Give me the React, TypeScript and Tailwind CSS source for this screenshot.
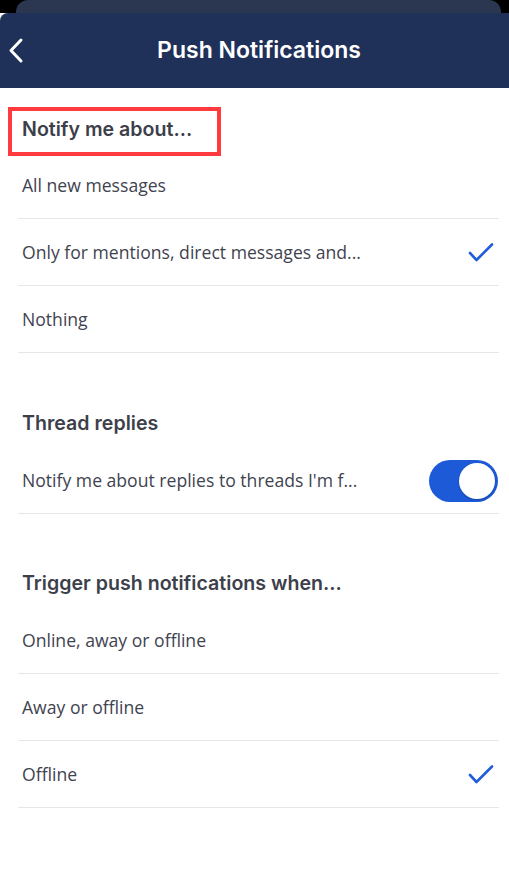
import React from "react";

function Check() {
  return (
    <svg width="26" height="20" viewBox="0 0 26 20" fill="none" className="shrink-0">
      <path d="M2 10 L8.5 17 L24 1.5" stroke="#1f5ddb" strokeWidth="2.6" strokeLinecap="round" strokeLinejoin="round" />
    </svg>
  );
}

function Row({ text, checked, toggle }: { text: string; checked?: boolean; toggle?: boolean }) {
  return (
    <div className="ml-[18px] mr-[10px] flex h-[67px] items-center justify-between border-b border-[#e6e6e8] pl-[4px]">
      <span className="text-[17.6px] text-[#3f4350]" style={{ fontFamily: '"Open Sans", sans-serif' }}>
        {text}
      </span>
      {checked && (
        <div className="mr-[5px] mt-[1px]">
          <Check />
        </div>
      )}
      {toggle && (
        <div className="mr-[1px] mt-[1px] flex h-[42px] w-[69px] items-center justify-end rounded-full bg-[#1d5ad8] pr-[3px]">
          <div className="h-[36px] w-[36px] rounded-full bg-white shadow-[0_1px_2px_rgba(0,0,0,0.25)]" />
        </div>
      )}
    </div>
  );
}

function Heading({ children, className = "" }: { children: React.ReactNode; className?: string }) {
  return (
    <div
      className={`pl-[22px] text-[19.6px] font-semibold leading-[24px] text-[#3d3f4b] ${className}`}
      style={{ fontFamily: 'Inter, "Open Sans", sans-serif' }}
    >
      {children}
    </div>
  );
}

export default function App() {
  return (
    <div className="min-h-[876px] w-[509px] bg-white">
      <div className="h-[13px] bg-black px-[16px] pr-[8px]">
        <div className="h-[13px] rounded-t-[12px] bg-[#2b3650]" />
      </div>
      <div className="relative flex h-[75px] items-center justify-center rounded-tl-[8px] bg-[#1f3059]">
        <svg className="absolute left-[7px] top-[24px]" width="18" height="28" viewBox="0 0 18 28" fill="none">
          <path d="M14 3 L4 13.5 L14 24" stroke="white" strokeWidth="3" strokeLinecap="round" strokeLinejoin="round" />
        </svg>
        <span
          className="ml-[9px] text-[23px] font-semibold text-white"
          style={{ fontFamily: 'Inter, "Open Sans", sans-serif' }}
        >
          Push Notifications
        </span>
      </div>

      <div className="relative pt-[29px] pb-[11px]">
        <div className="absolute left-[8px] top-[19px] h-[49px] w-[213px] border-[4px] border-[#ff3b40]" />
        <Heading>Notify me about...</Heading>
      </div>
      <Row text="All new messages" />
      <Row text="Only for mentions, direct messages and..." checked />
      <Row text="Nothing" />

      <div className="pt-[58px] pb-[12px]">
        <Heading>Thread replies</Heading>
      </div>
      <Row text="Notify me about replies to threads I'm f..." toggle />

      <div className="pt-[57px] pb-[12px]">
        <Heading>Trigger push notifications when...</Heading>
      </div>
      <Row text="Online, away or offline" />
      <Row text="Away or offline" />
      <Row text="Offline" checked />
    </div>
  );
}
